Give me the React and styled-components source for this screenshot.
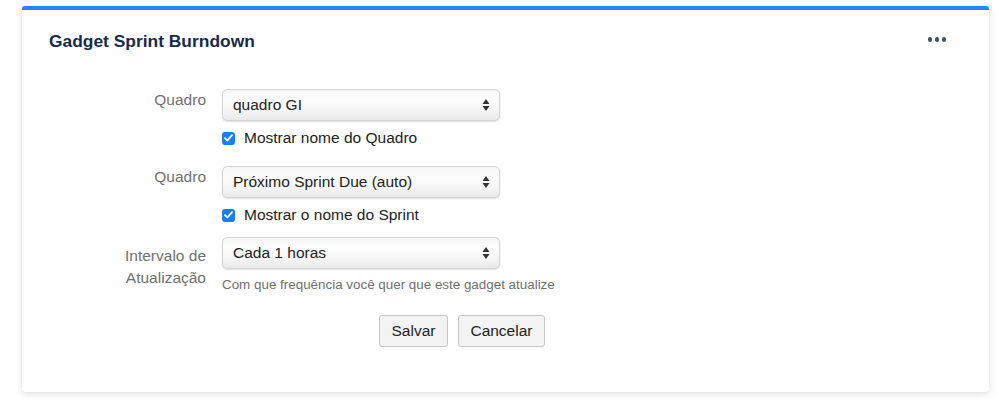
import React from "react";
import styled, { createGlobalStyle } from "styled-components";

const GlobalStyle = createGlobalStyle`
    html, body {
        margin: 0;
        padding: 0;
        background: #fff;
        font-family: "Liberation Sans", Arial, Helvetica, sans-serif;
    }
`

const Page = styled.div`
    padding: 6px 10px 10px 22px;
`

const Card = styled.div`
    width: 967px;
    box-sizing: border-box;
    background: #fff;
    border-top: 4px solid #2684ff;
    border-radius: 3px;
    box-shadow: 0 2px 7px rgba(0, 0, 0, 0.13), 0 0 1px rgba(0, 0, 0, 0.12);
    padding-bottom: 45px;
`

const Header = styled.div`
    display: flex;
    justify-content: space-between;
    align-items: center;
    padding: 21px 43px 0 27px;
    height: 40px;
    box-sizing: border-box;

    .header__title {
        margin: 0;
        font-size: 17.4px;
        font-weight: bold;
        line-height: 20px;
        color: #172b4d;
    }
`

const MoreButton = styled.div`
    display: flex;
    gap: 2.5px;
    align-items: center;
    margin-top: -2px;

    span {
        width: 4.5px;
        height: 4.5px;
        border-radius: 50%;
        background: #42526e;
    }
`

const Form = styled.div`
    display: grid;
    grid-template-columns: 184px auto;
    column-gap: 16px;
    margin-top: 39px;
    font-size: 15.5px;
`

const Label = styled.div`
    text-align: right;
    color: #707070;
    line-height: 22px;
    padding-top: ${p => p.$offset || 0}px;
    margin-top: ${p => p.$top || 0}px;
`

const Field = styled.div`
    display: flex;
    flex-direction: column;
    align-items: flex-start;
    margin-top: ${p => p.$top || 0}px;
`

const SelectBox = styled.div`
    width: 278px;
    height: 32px;
    box-sizing: border-box;
    display: flex;
    align-items: center;
    justify-content: space-between;
    padding: 0 9px 0 10px;
    border: 1px solid #d3d3d3;
    border-radius: 5px;
    background: linear-gradient(to bottom, #f6f6f6 0%, #fdfdfd 35%, #f3f3f3 75%, #e9e9e9 100%);
    box-shadow: 0 1px 1.5px rgba(0, 0, 0, 0.12);
    color: #222;
`

const CheckRow = styled.label`
    display: flex;
    align-items: center;
    gap: 9px;
    margin-top: 6px;
    line-height: 22px;
    color: #222;
`

const CheckBox = styled.span`
    width: 13px;
    height: 13px;
    border-radius: 3px;
    background: #1a7ef5;
    display: flex;
    align-items: center;
    justify-content: center;
`

const HelpText = styled.div`
    margin-top: 7px;
    font-size: 13.4px;
    line-height: 18px;
    color: #707070;
`

const ButtonRow = styled.div`
    grid-column: 2;
    display: flex;
    gap: 10px;
    padding-left: 157px;
    margin-top: 21px;
`

const Button = styled.button`
    height: 32px;
    padding: 0 11.5px;
    font-family: inherit;
    font-size: 15.5px;
    color: #222;
    background: #f3f3f3;
    border: 1px solid #c6c6c6;
    border-radius: 3px;
`

const Arrows = () => (
    <svg width="8" height="14" viewBox="0 0 8 14">
        <path d="M4 1 L7.5 6 L0.5 6 Z" fill="#333" />
        <path d="M4 13 L7.5 8 L0.5 8 Z" fill="#333" />
    </svg>
)

const Check = () => (
    <svg width="9" height="8" viewBox="0 0 9 8">
        <path d="M1 4.2 L3.4 6.5 L8 1.2" stroke="#fff" strokeWidth="1.8" fill="none" strokeLinecap="round" strokeLinejoin="round" />
    </svg>
)

const Select = ({ value }) => (
    <SelectBox>
        <span>{value}</span>
        <Arrows />
    </SelectBox>
)

export default function App() {
    return (
        <>
            <GlobalStyle />
            <Page>
                <Card>
                    <Header>
                        <p className='header__title'>Gadget Sprint Burndown</p>
                        <MoreButton><span /><span /><span /></MoreButton>
                    </Header>
                    <Form>
                        <Label>Quadro</Label>
                        <Field>
                            <Select value="quadro GI" />
                            <CheckRow><CheckBox><Check /></CheckBox>Mostrar nome do Quadro</CheckRow>
                        </Field>

                        <Label $top={17}>Quadro</Label>
                        <Field $top={17}>
                            <Select value="Próximo Sprint Due (auto)" />
                            <CheckRow><CheckBox><Check /></CheckBox>Mostrar o nome do Sprint</CheckRow>
                        </Field>

                        <Label $top={11} $offset={8}>Intervalo de<br />Atualização</Label>
                        <Field $top={11}>
                            <Select value="Cada 1 horas" />
                            <HelpText>Com que frequência você quer que este gadget atualize</HelpText>
                        </Field>

                        <ButtonRow>
                            <Button>Salvar</Button>
                            <Button>Cancelar</Button>
                        </ButtonRow>
                    </Form>
                </Card>
            </Page>
        </>
    )
}
